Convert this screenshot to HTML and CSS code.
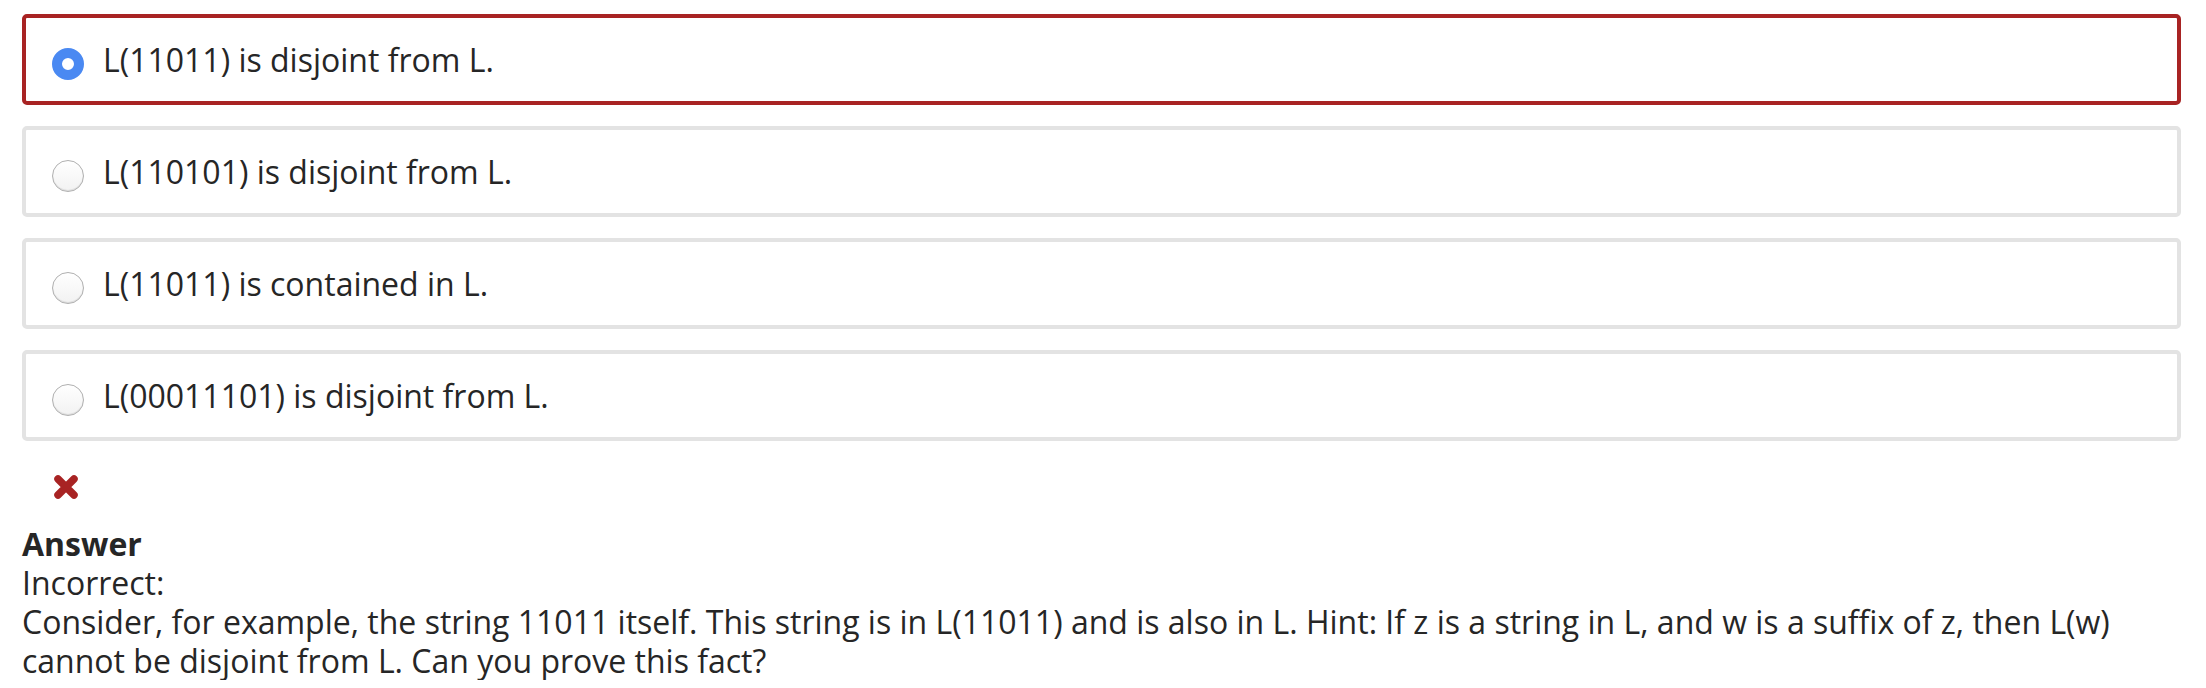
FILE: index.html
```html
<!DOCTYPE html>
<html>
<head>
<meta charset="utf-8">
<link rel="stylesheet" href="styles.css">
</head>
<body>
<div class="page">
  <div class="options">
    <label class="option option-wrong">
      <span class="radio radio-checked"></span>
      <span class="option-text">L(11011) is disjoint from L.</span>
    </label>
    <label class="option">
      <span class="radio"></span>
      <span class="option-text">L(110101) is disjoint from L.</span>
    </label>
    <label class="option">
      <span class="radio"></span>
      <span class="option-text">L(11011) is contained in L.</span>
    </label>
    <label class="option">
      <span class="radio"></span>
      <span class="option-text">L(00011101) is disjoint from L.</span>
    </label>
  </div>
  <div class="mark">
    <svg class="x-icon" viewBox="0 0 26 26" width="26" height="26" aria-hidden="true">
      <path d="M5 5 L21 21 M21 5 L5 21" stroke="#a82323" stroke-width="7.5" stroke-linecap="round" fill="none"/>
    </svg>
  </div>
  <div class="answer">
    <div class="answer-title">Answer</div>
    <div>Incorrect:</div>
    <div>Consider, for example, the string 11011 itself. This string is in L(11011) and is also in L. Hint: If z is a string in L, and w is a suffix of z, then L(w) cannot be disjoint from L. Can you prove this fact?</div>
  </div>
</div>
</body>
</html>
```

FILE: styles.css
```css
html, body {
  margin: 0;
  padding: 0;
  background: #ffffff;
}

body {
  font-family: "Open Sans", "Liberation Sans", sans-serif;
  font-size: 32px;
  line-height: 39px;
  color: #262626;
}

.page {
  padding: 14px 25px 0 22px;
}

.options {
  display: flex;
  flex-direction: column;
  gap: 21px;
}

.option {
  display: flex;
  align-items: center;
  height: 83px;
  border: 4px solid #e3e3e3;
  border-radius: 5px;
  padding: 0 26px;
  box-sizing: content-box;
}

.option-wrong {
  border-color: #a82323;
}

.radio {
  flex: 0 0 auto;
  width: 32px;
  height: 32px;
  border-radius: 50%;
  box-sizing: border-box;
  border: 1px solid #b0b0b0;
  background: linear-gradient(#ffffff, #f2f2f2);
  box-shadow: inset 0 -1px 1px rgba(0,0,0,0.1);
  margin-top: 8px;
  margin-right: 19px;
}

.radio-checked {
  border: 10.5px solid #4a89f2;
  background: #ffffff;
  box-shadow: none;
}

.option-text {
  white-space: nowrap;
}

.mark {
  padding: 33px 0 0 31px;
  height: 33px;
}

.x-icon {
  display: block;
}

.answer {
  padding-top: 17px;
}

.answer-title {
  font-weight: 700;
}
```
